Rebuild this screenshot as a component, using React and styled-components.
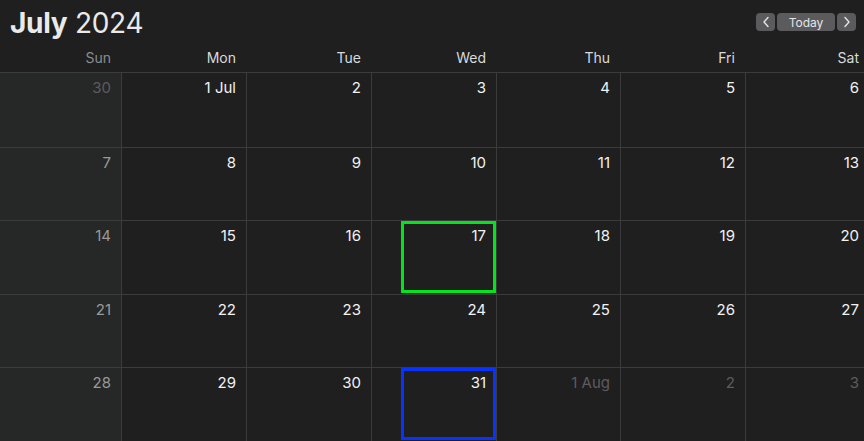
import React from 'react';
import styled, { createGlobalStyle } from 'styled-components';

const GlobalStyle = createGlobalStyle`
  html, body {
    margin: 0;
    padding: 0;
    background: #1f1f20;
    overflow: hidden;
  }
  body {
    font-family: 'Inter', 'Noto Sans', sans-serif;
    color: #ececec;
  }
`;

const Page = styled.div`
  width: 864px;
  height: 441px;
  display: flex;
  flex-direction: column;
  overflow: hidden;
  background: #1f1f20;
`;

const TopBar = styled.div`
  height: 45px;
  display: flex;
  align-items: flex-start;
  justify-content: space-between;
  padding: 0 8px 0 10px;
`;

const Title = styled.h1`
  margin: 6px 0 0;
  font-size: 28px;
  font-weight: 400;
  letter-spacing: -0.3px;
  color: #eaeaea;
  b {
    font-weight: 700;
  }
`;

const Nav = styled.div`
  display: flex;
  gap: 2px;
  margin-top: 13px;
`;

const NavButton = styled.button`
  height: 18px;
  min-width: ${(p) => (p.wide ? '58px' : '19px')};
  padding: 0;
  border: none;
  border-radius: 4px;
  background: #5b5b5e;
  color: #e4e4e4;
  font-family: inherit;
  font-size: 12px;
  display: flex;
  align-items: center;
  justify-content: center;
`;

const Grid = styled.div`
  flex: 1;
  display: grid;
  grid-template-columns: 121px 125px 125px 125px 124px 125px 124px;
  grid-template-rows: 28px repeat(5, 1fr);
`;

const DayLabel = styled.div`
  font-size: 14px;
  text-align: right;
  padding: 4px 10px 0 0;
  color: ${(p) => (p.weekend ? '#8c8c8c' : '#dadada')};
  border-bottom: 1px solid #3b3b3d;
`;

const Cell = styled.div`
  position: relative;
  text-align: right;
  padding: 5px 10px 0 0;
  font-size: 15px;
  border-left: ${(p) => (p.first ? 'none' : '1px solid #3b3b3d')};
  border-top: ${(p) => (p.top ? 'none' : '1px solid #3b3b3d')};
  background: ${(p) => (p.first ? '#262827' : 'transparent')};
  color: ${(p) => p.tone};
`;

const Highlight = styled.div`
  position: absolute;
  top: 0;
  bottom: 1px;
  left: 29px;
  right: 0;
  border: 3px solid ${(p) => p.color};
`;

const days = ['Sun', 'Mon', 'Tue', 'Wed', 'Thu', 'Fri', 'Sat'];

const buildCells = () => {
  const cells = [];
  for (let i = 0; i < 35; i++) {
    const day = i; // 0 = 30 Jun
    let label;
    let inMonth = true;
    if (day === 0) {
      label = '30';
      inMonth = false;
    } else if (day <= 31) {
      label = day === 1 ? '1 Jul' : String(day);
    } else {
      const aug = day - 31;
      label = aug === 1 ? '1 Aug' : String(aug);
      inMonth = false;
    }
    cells.push({ label, inMonth, col: i % 7, row: Math.floor(i / 7), day });
  }
  return cells;
};

const highlights = { 17: '#00e61a', 31: '#0832ff' };

const App = () => {
  const cells = buildCells();
  return (
    <Page>
      <GlobalStyle />
      <TopBar>
        <Title>
          <b>July</b> 2024
        </Title>
        <Nav>
          <NavButton>
            <svg width="8" height="12" viewBox="0 0 8 12" fill="none">
              <path d="M6 1.5L2 6l4 4.5" stroke="#e4e4e4" strokeWidth="1.4" strokeLinecap="round" strokeLinejoin="round" />
            </svg>
          </NavButton>
          <NavButton wide>Today</NavButton>
          <NavButton>
            <svg width="8" height="12" viewBox="0 0 8 12" fill="none">
              <path d="M2 1.5L6 6l-4 4.5" stroke="#e4e4e4" strokeWidth="1.4" strokeLinecap="round" strokeLinejoin="round" />
            </svg>
          </NavButton>
        </Nav>
      </TopBar>
      <Grid>
        {days.map((d, i) => (
          <DayLabel key={d} weekend={i === 0}>
            {d}
          </DayLabel>
        ))}
        {cells.map((c) => {
          let tone = '#f2f2f2';
          if (!c.inMonth) tone = '#5c5c5e';
          else if (c.col === 0) tone = '#9a9a9a';
          return (
            <Cell key={c.day} first={c.col === 0} top={c.row === 0} tone={tone}>
              {c.inMonth && highlights[c.day] && <Highlight color={highlights[c.day]} />}
              {c.label}
            </Cell>
          );
        })}
      </Grid>
    </Page>
  );
};

export default App;
